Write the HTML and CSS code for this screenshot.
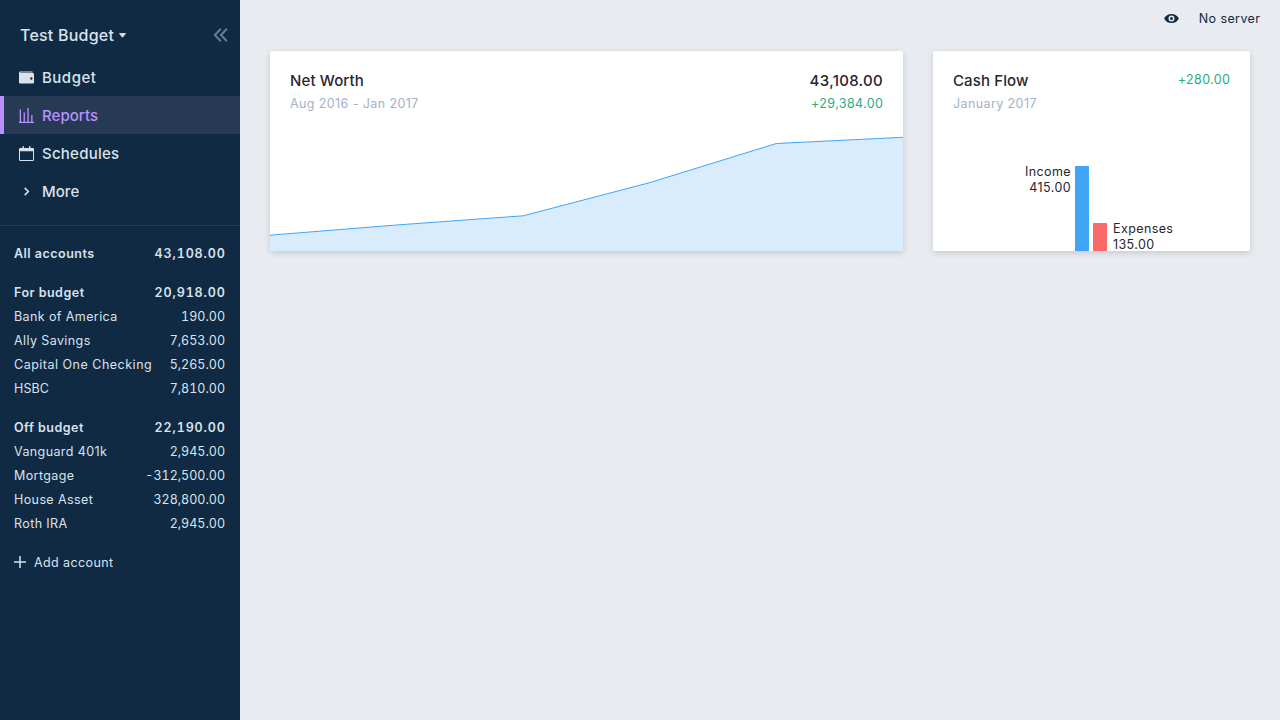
FILE: index.html
```html
<!DOCTYPE html>
<html lang="en">
<head>
<meta charset="utf-8">
<title>Reports</title>
<link rel="stylesheet" href="styles.css">
</head>
<body>
<aside class="sidebar">
  <header class="budget-head">
    <span class="budget-name">Test Budget</span>
    <svg class="caret" width="7" height="5" viewBox="0 0 7 5"><path d="M.4.5h6.2L3.500 4.300z" fill="currentColor" stroke="currentColor" stroke-width=".8" stroke-linejoin="round"/></svg>
    <svg class="collapse" width="14" height="14" viewBox="0 0 14 14" fill="none" stroke="currentColor" stroke-width="2"><path d="M6.800.800.900 7l5.900 6.200M12.900.800 7 7l5.900 6.200"/></svg>
  </header>
  <nav class="nav">
    <a class="nav-item"><svg width="15" height="15" viewBox="0 0 15 15" fill="currentColor"><path fill-rule="evenodd" d="M0 2.800C0 2 .6 1.400 1.400 1.400h11.400c.6 0 1 .4 1 1H1.400v.7h12.400c.7 0 1.200.5 1.200 1.200v8c0 .8-.5 1.300-1.200 1.300H1.300C.5 13.600 0 13 0 12.300zM12.300 9.700a1.200 1.200 0 1 0 0-2.400 1.200 1.200 0 0 0 0 2.400z"/></svg><span class="wide">Budget</span></a>
    <a class="nav-item active"><svg width="15" height="15" viewBox="0 0 15 15" fill="currentColor"><path d="M0 13.700h15V15H0zM.7 1.500H2V14H.7zM4.600 4.500h1.300V14H4.600zM8.400 0h1.300v14H8.400zM12.200 7h1.300v7h-1.300z"/></svg><span>Reports</span></a>
    <a class="nav-item"><svg width="15" height="15" viewBox="0 0 15 15" fill="currentColor"><path fill-rule="evenodd" d="M0 3.200C0 2.500.5 2 1.200 2H3.500V.300h1.500V2h5V.300h1.500V2h2.300c.7 0 1.200.5 1.200 1.200v10.600c0 .7-.5 1.200-1.200 1.200H1.200C.5 15 0 14.500 0 13.800zM1 5.200V13.900h13V5.200z"/></svg><span class="mid">Schedules</span></a>
    <a class="nav-item"><svg width="15" height="15" viewBox="0 0 15 15" fill="none" stroke="currentColor" stroke-width="1.600"><path d="m5.700 3.900 3.600 3.600-3.600 3.600"/></svg><span>More</span></a>
  </nav>
  <div class="accounts">
    <div class="group">
      <div class="row total"><span>All accounts</span><span class="amount">43,108.00</span></div>
    </div>
    <div class="group">
      <div class="row total"><span>For budget</span><span class="amount">20,918.00</span></div>
      <div class="row"><span>Bank of America</span><span class="amount">190.00</span></div>
      <div class="row"><span>Ally Savings</span><span class="amount">7,653.00</span></div>
      <div class="row"><span class="long">Capital One Checking</span><span class="amount">5,265.00</span></div>
      <div class="row"><span class="tight">HSBC</span><span class="amount">7,810.00</span></div>
    </div>
    <div class="group">
      <div class="row total"><span>Off budget</span><span class="amount">22,190.00</span></div>
      <div class="row"><span>Vanguard 401k</span><span class="amount">2,945.00</span></div>
      <div class="row"><span>Mortgage</span><span class="amount">-312,500.00</span></div>
      <div class="row"><span>House Asset</span><span class="amount">328,800.00</span></div>
      <div class="row"><span>Roth IRA</span><span class="amount">2,945.00</span></div>
    </div>
    <div class="add"><svg width="12" height="12" viewBox="0 0 12 12" stroke="currentColor" stroke-width="1.500"><path d="M0 6h12M6 0v12"/></svg><span>Add account</span></div>
  </div>
</aside>
<main class="page">
  <div class="topbar">
    <svg width="15" height="15" viewBox="0 0 20 20" fill="currentColor"><path fill-rule="evenodd" d="M.2 10a11 11 0 0 1 19.600 0A11 11 0 0 1 .2 10zm9.800 4a4 4 0 1 0 0-8 4 4 0 0 0 0 8zm0-2a2 2 0 1 1 0-4 2 2 0 0 1 0 4z"/></svg>
    <span>No server</span>
  </div>
  <div class="cards">
    <section class="card">
      <div class="card-head">
        <div><div class="title">Net Worth</div><div class="sub">Aug 2016 - Jan 2017</div></div>
        <div class="right"><div class="title value">43,108.00</div><div class="gain">+29,384.00</div></div>
      </div>
      <svg class="area" width="633" height="120" viewBox="0 0 633 120"><path fill="#d8ecfd" d="M0 104.200 126.600 94 253.200 84.800 379.800 51.600 506.400 12.500 633 6.300V120H0z"/><path fill="none" stroke="#40a5f7" d="M0 104.200 126.600 94 253.200 84.800 379.800 51.600 506.400 12.500 633 6.300"/></svg>
    </section>
    <section class="card">
      <div class="card-head">
        <div><div class="title">Cash Flow</div><div class="sub">January 2017</div></div>
        <div class="gain">+280.00</div>
      </div>
      <div class="bars">
        <div class="label income-label">Income<br>415.00</div>
        <div class="bar income"></div>
        <div class="bar expenses"></div>
        <div class="label expenses-label">Expenses<br>135.00</div>
      </div>
    </section>
  </div>
</main>
</body>
</html>
```
FILE: styles.css
```css
* { box-sizing: border-box; }
body {
  margin: 0;
  height: 720px;
  display: flex;
  overflow: hidden;
  background: #e8ecf0;
  color: #272630;
  font: 12.5px/16px Inter, sans-serif;
  letter-spacing: .4px;
}
svg { display: block; flex: none; }
.sidebar {
  width: 240px;
  flex: none;
  background: #102a43;
  color: #d9e2ec;
}
.budget-head {
  display: flex;
  align-items: center;
  height: 58px;
  padding: 12px 12px 0 20px;
}
.budget-name { font-size: 16px; font-weight: 500; line-height: 20px; letter-spacing: .22px; }
.caret { margin-left: 5px; }
.collapse { margin-left: auto; color: #627d98; }
.nav { padding-bottom: 15px; border-bottom: 1px solid #243b53; }
.nav-item {
  display: flex;
  align-items: center;
  gap: 8px;
  height: 38px;
  padding: 1px 0 0 19px;
  font-size: 15px;
  font-weight: 500;
  line-height: 19px;
  letter-spacing: .05px;
}
.nav-item svg { margin-top: -1px; }
.nav-item .wide { letter-spacing: .5px; }
.nav-item .mid { letter-spacing: .25px; }
.nav-item.active {
  padding-left: 15px;
  border-left: 4px solid #b990ff;
  background: #263b53;
  color: #b990ff;
}
.accounts { padding: 15px 15px 0 14px; }
.group { margin-bottom: 15px; }
.row { display: flex; justify-content: space-between; align-items: center; height: 24px; }
.row span, .add span { padding-top: 2px; }
.row .long { letter-spacing: .5px; }
.row .tight { letter-spacing: .1px; }
.amount { font-feature-settings: "tnum"; letter-spacing: 0; }
.total { font-weight: 600; letter-spacing: .5px; }
.total .amount { margin-right: -.6px; letter-spacing: .85px; }
.add { display: flex; align-items: center; gap: 8px; height: 24px; }
.page { flex: 1; }
.topbar {
  display: flex;
  justify-content: flex-end;
  align-items: center;
  gap: 20px;
  height: 36px;
  padding: 1px 20px 0 0;
  color: #102a43;
}
.topbar span { margin-right: -.4px; }
.cards { display: grid; grid-template-columns: 633px 317px; gap: 30px; padding: 15px 30px; }
.card {
  display: flex;
  flex-direction: column;
  height: 200px;
  overflow: hidden;
  border-radius: 2px;
  background: #fff;
  box-shadow: 0 2px 6px rgba(0, 0, 0, .15);
}
.card-head { display: flex; justify-content: space-between; height: 80px; padding: 20px 20px 0; }
.title { margin-bottom: 5px; font-size: 15px; font-weight: 500; line-height: 19px; letter-spacing: .12px; }
.title.value { letter-spacing: .3px; }
.right { text-align: right; }
.sub { padding-top: 1px; color: #9fb3c8; }
.gain { padding-top: 1px; color: #27ab83; margin-right: -.4px; }
.bars { display: flex; align-items: flex-end; height: 120px; padding-left: 91px; }
.label { width: 47px; line-height: 16px; }
.bar { width: 14px; }
.income { height: 85px; margin: 0 4px; background: #40a5f7; }
.expenses { height: 28px; margin-right: 6px; background: #fa6a6a; }
.income-label { height: 87px; text-align: right; }
.expenses-label { height: 30px; }
```
